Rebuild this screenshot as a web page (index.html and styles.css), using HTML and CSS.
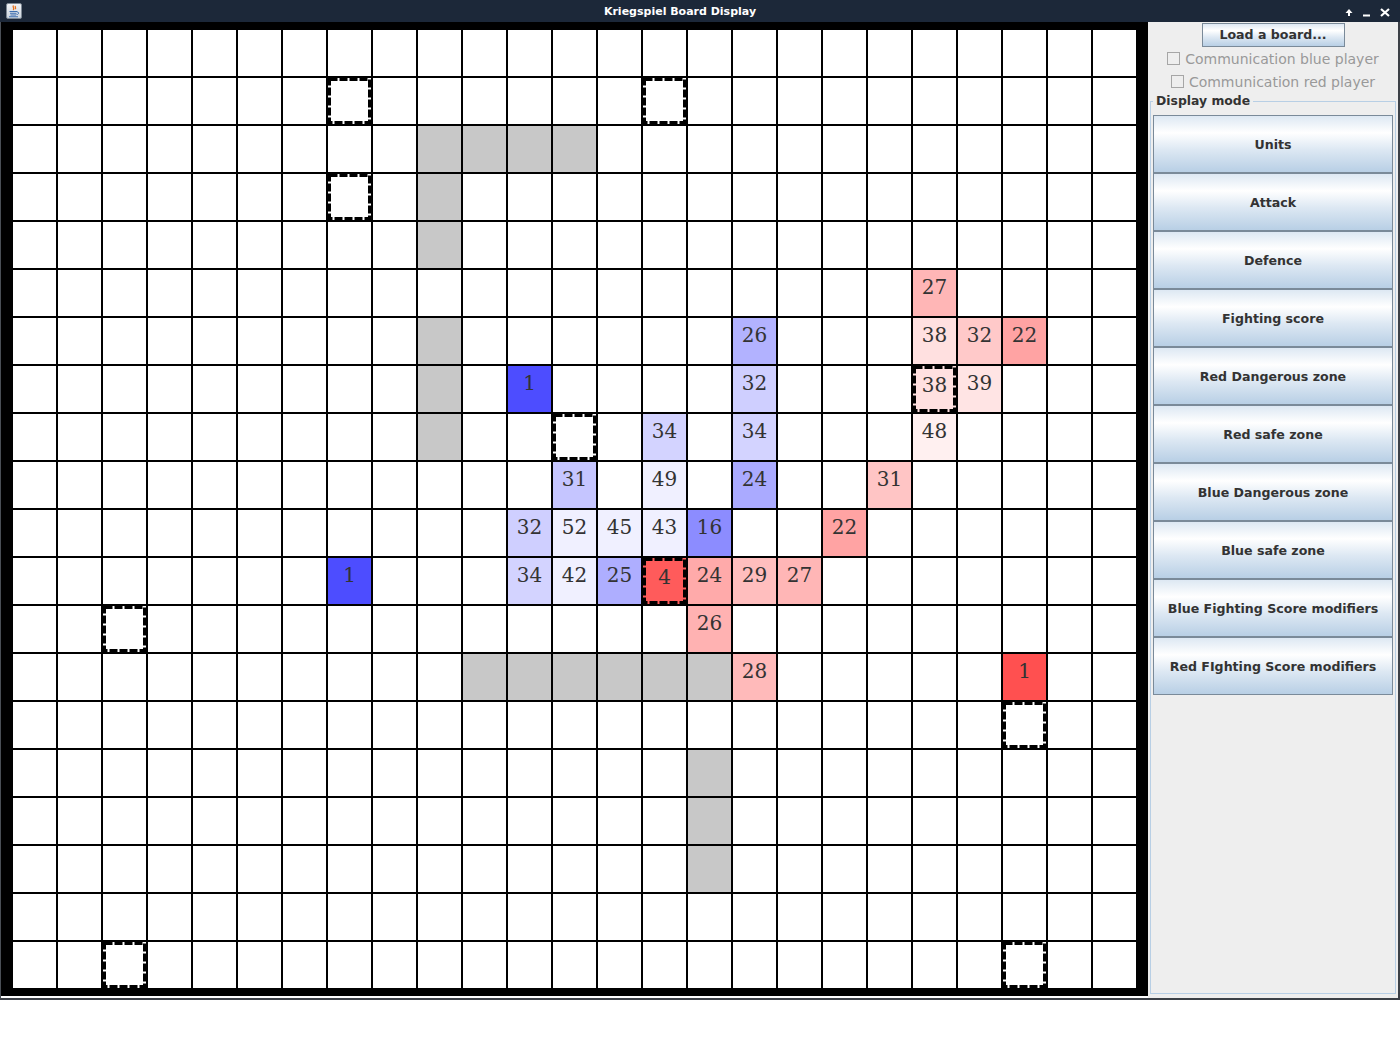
FILE: index.html
```html
<!DOCTYPE html>
<html lang="en">
<head>
<meta charset="utf-8">
<title>Kriegspiel Board Display</title>
<link rel="stylesheet" href="styles.css">
</head>
<body>
<div class="window">
  <div class="titlebar">
    <svg class="appicon" width="16" height="16" viewBox="0 0 16 16">
      <defs>
        <linearGradient id="ig" x1="0" y1="0" x2="0" y2="1">
          <stop offset="0" stop-color="#f2f4f7"/>
          <stop offset="1" stop-color="#c9d2dc"/>
        </linearGradient>
      </defs>
      <rect x="0.5" y="0.5" width="15" height="15" rx="1.5" fill="url(#ig)" stroke="#7d8894"/>
      <path d="M7.5 2.5 C6 4 9 5 7.2 7 M9.5 3 C8.6 4.2 10.3 4.8 9.3 6.2" stroke="#e8711c" stroke-width="1.3" fill="none"/>
      <path d="M3.5 8.5 H11 M4 10.3 H10.5 M4.5 12 H10 M3 13.7 H12" stroke="#3f6fb0" stroke-width="1.1" fill="none"/>
      <path d="M11 8.8 C13.2 8.8 13.2 11.6 10.5 11.6" stroke="#3f6fb0" stroke-width="1" fill="none"/>
    </svg>
    <div class="wtitle">Kriegspiel Board Display</div>
    <svg class="wbtns" width="58" height="22" viewBox="0 0 58 22">
      <path d="M9 16 V10" stroke="#fff" stroke-width="2" fill="none"/>
      <path d="M5.5 13 L9 9 L12.5 13 Z" fill="#fff"/>
      <rect x="23" y="14.5" width="7" height="2" fill="#fff"/>
      <path d="M41 9 L49 16 M49 9 L41 16" stroke="#fff" stroke-width="2.2" fill="none"/>
    </svg>
  </div>
  <div class="content">
    <div class="board">
      <table class="grid">
        <tr><td></td><td></td><td></td><td></td><td></td><td></td><td></td><td></td><td></td><td></td><td></td><td></td><td></td><td></td><td></td><td></td><td></td><td></td><td></td><td></td><td></td><td></td><td></td><td></td><td></td></tr>
        <tr><td></td><td></td><td></td><td></td><td></td><td></td><td></td><td class="dash"><svg class="dsh" width="43" height="46"><rect x="1.5" y="1.5" width="40" height="43"/></svg></td><td></td><td></td><td></td><td></td><td></td><td></td><td class="dash"><svg class="dsh" width="43" height="46"><rect x="1.5" y="1.5" width="40" height="43"/></svg></td><td></td><td></td><td></td><td></td><td></td><td></td><td></td><td></td><td></td><td></td></tr>
        <tr><td></td><td></td><td></td><td></td><td></td><td></td><td></td><td></td><td></td><td class="g"></td><td class="g"></td><td class="g"></td><td class="g"></td><td></td><td></td><td></td><td></td><td></td><td></td><td></td><td></td><td></td><td></td><td></td><td></td></tr>
        <tr><td></td><td></td><td></td><td></td><td></td><td></td><td></td><td class="dash"><svg class="dsh" width="43" height="46"><rect x="1.5" y="1.5" width="40" height="43"/></svg></td><td></td><td class="g"></td><td></td><td></td><td></td><td></td><td></td><td></td><td></td><td></td><td></td><td></td><td></td><td></td><td></td><td></td><td></td></tr>
        <tr><td></td><td></td><td></td><td></td><td></td><td></td><td></td><td></td><td></td><td class="g"></td><td></td><td></td><td></td><td></td><td></td><td></td><td></td><td></td><td></td><td></td><td></td><td></td><td></td><td></td><td></td></tr>
        <tr><td></td><td></td><td></td><td></td><td></td><td></td><td></td><td></td><td></td><td></td><td></td><td></td><td></td><td></td><td></td><td></td><td></td><td></td><td></td><td></td><td class="r27"><span>27</span></td><td></td><td></td><td></td><td></td></tr>
        <tr><td></td><td></td><td></td><td></td><td></td><td></td><td></td><td></td><td></td><td class="g"></td><td></td><td></td><td></td><td></td><td></td><td></td><td class="b26"><span>26</span></td><td></td><td></td><td></td><td class="r38"><span>38</span></td><td class="r32"><span>32</span></td><td class="r22"><span>22</span></td><td></td><td></td></tr>
        <tr><td></td><td></td><td></td><td></td><td></td><td></td><td></td><td></td><td></td><td class="g"></td><td></td><td class="b1"><span>1</span></td><td></td><td></td><td></td><td></td><td class="b32"><span>32</span></td><td></td><td></td><td></td><td class="r38 dash"><span>38</span><svg class="dsh" width="43" height="46"><rect x="1.5" y="1.5" width="40" height="43"/></svg></td><td class="r39"><span>39</span></td><td></td><td></td><td></td></tr>
        <tr><td></td><td></td><td></td><td></td><td></td><td></td><td></td><td></td><td></td><td class="g"></td><td></td><td></td><td class="dash"><svg class="dsh" width="43" height="46"><rect x="1.5" y="1.5" width="40" height="43"/></svg></td><td></td><td class="b34"><span>34</span></td><td></td><td class="b34"><span>34</span></td><td></td><td></td><td></td><td class="r48"><span>48</span></td><td></td><td></td><td></td><td></td></tr>
        <tr><td></td><td></td><td></td><td></td><td></td><td></td><td></td><td></td><td></td><td></td><td></td><td></td><td class="b31"><span>31</span></td><td></td><td class="b49"><span>49</span></td><td></td><td class="b24"><span>24</span></td><td></td><td></td><td class="r31"><span>31</span></td><td></td><td></td><td></td><td></td><td></td></tr>
        <tr><td></td><td></td><td></td><td></td><td></td><td></td><td></td><td></td><td></td><td></td><td></td><td class="b32"><span>32</span></td><td class="b52"><span>52</span></td><td class="b45"><span>45</span></td><td class="b43"><span>43</span></td><td class="b16"><span>16</span></td><td></td><td></td><td class="r22"><span>22</span></td><td></td><td></td><td></td><td></td><td></td><td></td></tr>
        <tr><td></td><td></td><td></td><td></td><td></td><td></td><td></td><td class="b1"><span>1</span></td><td></td><td></td><td></td><td class="b34"><span>34</span></td><td class="b42"><span>42</span></td><td class="b25"><span>25</span></td><td class="r4 dash"><span>4</span><svg class="dsh" width="43" height="46"><rect x="1.5" y="1.5" width="40" height="43"/></svg></td><td class="r24"><span>24</span></td><td class="r29"><span>29</span></td><td class="r27"><span>27</span></td><td></td><td></td><td></td><td></td><td></td><td></td><td></td></tr>
        <tr><td></td><td></td><td class="dash"><svg class="dsh" width="43" height="46"><rect x="1.5" y="1.5" width="40" height="43"/></svg></td><td></td><td></td><td></td><td></td><td></td><td></td><td></td><td></td><td></td><td></td><td></td><td></td><td class="r26"><span>26</span></td><td></td><td></td><td></td><td></td><td></td><td></td><td></td><td></td><td></td></tr>
        <tr><td></td><td></td><td></td><td></td><td></td><td></td><td></td><td></td><td></td><td></td><td class="g"></td><td class="g"></td><td class="g"></td><td class="g"></td><td class="g"></td><td class="g"></td><td class="r28"><span>28</span></td><td></td><td></td><td></td><td></td><td></td><td class="r1"><span>1</span></td><td></td><td></td></tr>
        <tr><td></td><td></td><td></td><td></td><td></td><td></td><td></td><td></td><td></td><td></td><td></td><td></td><td></td><td></td><td></td><td></td><td></td><td></td><td></td><td></td><td></td><td></td><td class="dash"><svg class="dsh" width="43" height="46"><rect x="1.5" y="1.5" width="40" height="43"/></svg></td><td></td><td></td></tr>
        <tr><td></td><td></td><td></td><td></td><td></td><td></td><td></td><td></td><td></td><td></td><td></td><td></td><td></td><td></td><td></td><td class="g"></td><td></td><td></td><td></td><td></td><td></td><td></td><td></td><td></td><td></td></tr>
        <tr><td></td><td></td><td></td><td></td><td></td><td></td><td></td><td></td><td></td><td></td><td></td><td></td><td></td><td></td><td></td><td class="g"></td><td></td><td></td><td></td><td></td><td></td><td></td><td></td><td></td><td></td></tr>
        <tr><td></td><td></td><td></td><td></td><td></td><td></td><td></td><td></td><td></td><td></td><td></td><td></td><td></td><td></td><td></td><td class="g"></td><td></td><td></td><td></td><td></td><td></td><td></td><td></td><td></td><td></td></tr>
        <tr><td></td><td></td><td></td><td></td><td></td><td></td><td></td><td></td><td></td><td></td><td></td><td></td><td></td><td></td><td></td><td></td><td></td><td></td><td></td><td></td><td></td><td></td><td></td><td></td><td></td></tr>
        <tr><td></td><td></td><td class="dash"><svg class="dsh" width="43" height="46"><rect x="1.5" y="1.5" width="40" height="43"/></svg></td><td></td><td></td><td></td><td></td><td></td><td></td><td></td><td></td><td></td><td></td><td></td><td></td><td></td><td></td><td></td><td></td><td></td><td></td><td></td><td class="dash"><svg class="dsh" width="43" height="46"><rect x="1.5" y="1.5" width="40" height="43"/></svg></td><td></td><td></td></tr>
      </table>
    </div>
    <div class="panel">
      <button class="load" type="button">Load a board...</button>
      <label class="chk"><span class="box"></span>Communication blue player</label>
      <label class="chk"><span class="box"></span>Communication red player</label>
      <fieldset class="modes">
        <legend>Display mode</legend>
        <button class="mode" type="button">Units</button>
        <button class="mode" type="button">Attack</button>
        <button class="mode" type="button">Defence</button>
        <button class="mode" type="button">Fighting score</button>
        <button class="mode" type="button">Red Dangerous zone</button>
        <button class="mode" type="button">Red safe zone</button>
        <button class="mode" type="button">Blue Dangerous zone</button>
        <button class="mode" type="button">Blue safe zone</button>
        <button class="mode" type="button">Blue Fighting Score modifiers</button>
        <button class="mode" type="button">Red FIghting Score modifiers</button>
      </fieldset>
    </div>
  </div>
</div>
</body>
</html>
```
FILE: styles.css
```css
html, body {
  margin: 0;
  padding: 0;
  background: #ffffff;
}

.window {
  width: 1400px;
  display: flex;
  flex-direction: column;
}

.titlebar {
  height: 22px;
  background: #1c2839;
  display: flex;
  align-items: center;
  padding-left: 6px;
  padding-right: 2px;
  box-sizing: border-box;
}

.appicon {
  flex: none;
  display: block;
}

.wtitle {
  flex: 1;
  text-align: center;
  color: #ffffff;
  font-family: "DejaVu Sans", sans-serif;
  font-weight: bold;
  font-size: 11px;
  line-height: 20px;
  padding-top: 2px;
  padding-right: 2px;
}

.wbtns {
  flex: none;
  display: block;
}

.content {
  display: flex;
  height: 976px;
  border-left: 1px solid #4a4f56;
  border-right: 2px solid #3c4047;
  border-bottom: 2px solid #3c4047;
}

.board {
  width: 1147px;
  height: 974px;
  box-sizing: border-box;
  background: #000000;
  padding: 6px 10px;
  flex: none;
}

.grid {
  border-collapse: separate;
  border-spacing: 2px;
  table-layout: fixed;
  background: #000000;
}

.grid td {
  width: 43px;
  height: 46px;
  padding: 0;
  background: #ffffff;
  vertical-align: top;
  text-align: center;
  position: relative;
  font-family: "DejaVu Serif", serif;
  font-size: 20px;
  color: #333333;
}

.grid td span {
  display: block;
  padding-top: 7px;
  line-height: 20px;
}

.grid td.dash span {
  padding-top: 9px;
}

.dsh {
  position: absolute;
  left: 0;
  top: 0;
  display: block;
}

.dsh rect {
  fill: none;
  stroke: #000000;
  stroke-width: 3;
  stroke-dasharray: 8 2;
}

.grid td.g { background: #c8c8c8; }

/* blue heat values */
.grid td.b1  { background: #4d4dff; }
.grid td.b16 { background: #8c8cff; }
.grid td.b24 { background: #aaaaff; }
.grid td.b25 { background: #aeaeff; }
.grid td.b26 { background: #b2b2ff; }
.grid td.b31 { background: #c5c5ff; }
.grid td.b32 { background: #cfcfff; }
.grid td.b34 { background: #d3d3ff; }
.grid td.b42,
.grid td.b43,
.grid td.b45,
.grid td.b49,
.grid td.b52 { background: #f0f0ff; }

/* red heat values */
.grid td.r1  { background: #ff5050; }
.grid td.r4  { background: #ff5b5b; }
.grid td.r22 { background: #ffa3a3; }
.grid td.r24 { background: #ffaaaa; }
.grid td.r26 { background: #ffb2b2; }
.grid td.r27 { background: #ffb6b6; }
.grid td.r28 { background: #ffbaba; }
.grid td.r29 { background: #ffbebe; }
.grid td.r31 { background: #ffc5c5; }
.grid td.r32 { background: #ffc9c9; }
.grid td.r38 { background: #ffe0e0; }
.grid td.r39 { background: #ffe4e4; }
.grid td.r48 { background: #fff0f0; }

.panel {
  width: 250px;
  flex: none;
  background: #eeeeee;
  display: flex;
  flex-direction: column;
  align-items: center;
  padding-top: 1px;
  box-sizing: border-box;
  font-family: "DejaVu Sans", sans-serif;
}

.load,
.mode {
  font-family: "DejaVu Sans", sans-serif;
  font-weight: bold;
  font-size: 12.6px;
  color: #333333;
  border: 1px solid #7a8a99;
  background: linear-gradient(to bottom, #dde8f3 0%, #ffffff 30%, #dde8f3 60%, #b8cfe5 100%);
  padding: 0;
  margin: 0;
  box-sizing: border-box;
  cursor: default;
}

.load {
  width: 143px;
  height: 24px;
  flex: none;
  padding-bottom: 1px;
}

.chk {
  height: 23px;
  display: flex;
  align-items: center;
  gap: 5px;
  color: #999999;
  font-size: 14px;
  flex: none;
}

.box {
  width: 13px;
  height: 13px;
  box-sizing: border-box;
  border: 1px solid #a6a6a6;
  background: #eeeeee;
  flex: none;
}

.modes {
  align-self: stretch;
  flex: 1;
  min-width: 0;
  margin: 1px 2px 4px;
  padding: 7px 2px 0;
  border: 1px solid #b8cfe5;
  display: flex;
  flex-direction: column;
}

.modes legend {
  padding: 0 3px;
  font-weight: bold;
  font-size: 12.4px;
  line-height: 14px;
  color: #333333;
}

.mode {
  display: block;
  width: 100%;
  height: 58px;
  flex: none;
}
```
